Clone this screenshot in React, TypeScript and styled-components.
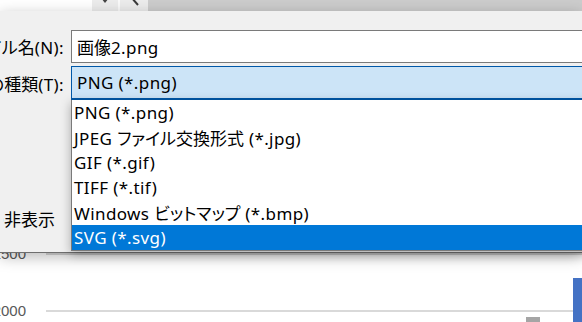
import React from "react";
import styled, { createGlobalStyle } from "styled-components";

const Global = createGlobalStyle`
  html, body { margin: 0; padding: 0; background: #ffffff; }
  body {
    width: 582px; height: 322px; overflow: hidden;
    font-family: "Noto Sans", "Noto Sans CJK JP", sans-serif;
    color: #000;
  }
`;

const Screen = styled.div`
  width: 582px;
  height: 322px;
  display: flex;
  flex-direction: column;
  overflow: hidden;
`;

const TopStrip = styled.div`
  display: flex;
  height: 11px;
  flex: none;
`;

const StripSeg = styled.div<{ $w?: number; $bg: string }>`
  ${(p) => (p.$w ? `width: ${p.$w}px; flex: none;` : "flex: 1;")}
  background: ${(p) => p.$bg};
  display: flex;
  align-items: flex-start;
  justify-content: center;
  overflow: hidden;
`;

const Divider = styled.div`
  width: 2px;
  flex: none;
  background: #fafafa;
`;

const Dialog = styled.div`
  flex: none;
  height: 242px;
  box-sizing: border-box;
  background: #f0f0f0;
  border-bottom: 1px solid #6e6e6e;
  box-shadow: 0 4px 14px rgba(0, 0, 0, 0.28);
  position: relative;
  z-index: 2;
  padding-top: 19px;
  display: flex;
  flex-direction: column;
  font-family: "Noto Sans", "Noto Sans CJK JP", sans-serif;
  font-size: 17px;
  letter-spacing: 0.4px;
`;

const Cjk = styled.span`
  font-family: "Noto Sans CJK JP", sans-serif;
  font-size: 17px;
  letter-spacing: 0;
  font-feature-settings: "palt" 1;
`;

const FieldRow = styled.div<{ $gap?: number }>`
  display: grid;
  grid-template-columns: 64px 1fr;
  column-gap: 7px;
  align-items: center;
  margin-top: ${(p) => p.$gap ?? 0}px;
`;

const Label = styled.div<{ $w?: number; $indent?: number }>`
  display: flex;
  justify-content: flex-end;
  align-items: baseline;
  overflow: hidden;
  white-space: nowrap;
  ${(p) => (p.$w ? `width: ${p.$w}px;` : "")}
  margin-left: ${(p) => p.$indent ?? 0}px;
`;

const Txt = styled.span`
  flex: none;
  font-family: inherit;
  font-size: inherit;
`;

const Field = styled.div<{ $active?: boolean }>`
  height: ${(p) => (p.$active ? 34 : 33)}px;
  box-sizing: border-box;
  border: 1px solid ${(p) => (p.$active ? "#0058a8" : "#7a7a7a")};
  border-bottom-width: ${(p) => (p.$active ? 2 : 1)}px;
  border-right: none;
  background: ${(p) => (p.$active ? "#cce4f7" : "#ffffff")};
  padding-left: 5px;
  display: flex;
  align-items: center;
  white-space: nowrap;
`;

const ComboWrap = styled.div`
  position: relative;
`;

const List = styled.ul`
  position: absolute;
  top: 100%;
  left: 0;
  right: -10px;
  margin: 0;
  padding: 0;
  list-style: none;
  background: #ffffff;
  border: 1px solid #7a7a7a;
  border-top: none;
  box-shadow: 0 3px 10px rgba(0, 0, 0, 0.3);
  font-family: inherit;
  font-size: inherit;
`;

const Item = styled.li<{ $selected?: boolean }>`
  height: 25px;
  padding-left: 2px;
  display: flex;
  align-items: center;
  white-space: nowrap;
  background: ${(p) => (p.$selected ? "#0078d7" : "transparent")};
  color: ${(p) => (p.$selected ? "#ffffff" : "#000000")};
`;

const HideRow = styled.div`
  margin-top: 106px;
  height: 25px;
  display: flex;
  align-items: center;
`;

const Chart = styled.div`
  flex: 1;
  position: relative;
  overflow: hidden;
  background: #ffffff;
`;

const AxisGrid = styled.div`
  margin-top: -28px;
  display: grid;
  grid-template-columns: 26px 1fr;
  column-gap: 20px;
  grid-auto-rows: 57px;
  align-items: center;
`;

const AxisLabel = styled.div`
  display: flex;
  justify-content: flex-end;
  overflow: hidden;
  white-space: nowrap;
  font-family: "Liberation Sans", Arial, sans-serif;
  font-size: 15px;
  color: #595959;
  line-height: 1;
`;

const GridLine = styled.div`
  height: 2px;
  background: #d9d9d9;
`;

const Bar = styled.div<{ $left: number; $width: number; $top: number; $color: string }>`
  position: absolute;
  left: ${(p) => p.$left}px;
  width: ${(p) => p.$width}px;
  top: ${(p) => p.$top}px;
  bottom: 0;
  background: ${(p) => p.$color};
`;

const CJK_RUN = /([\u3040-\u30ff\u3400-\u9fff]+)/;

function Mixed({ text }: { text: string }) {
  return (
    <Txt>
      {text.split(CJK_RUN).map((part, i) =>
        part === "" ? null : CJK_RUN.test(part) ? (
          <Cjk key={i}>{part}</Cjk>
        ) : (
          <React.Fragment key={i}>{part}</React.Fragment>
        )
      )}
    </Txt>
  );
}

const types = [
  "PNG (*.png)",
  "JPEG ファイル交換形式 (*.jpg)",
  "GIF (*.gif)",
  "TIFF (*.tif)",
  "Windows ビットマップ (*.bmp)",
  "SVG (*.svg)",
];

export default function App() {
  return (
    <>
      <Global />
      <Screen>
        <TopStrip>
          <StripSeg $w={92} $bg="#ffffff" />
          <StripSeg $w={26} $bg="#ececec">
            <svg width="10" height="4" viewBox="0 0 10 4">
              <path d="M1 -2 L5 3 L9 -2 Z" fill="#444" />
            </svg>
          </StripSeg>
          <Divider />
          <StripSeg $w={28} $bg="#ececec">
            <svg width="16" height="6" viewBox="0 0 16 6" style={{ marginLeft: 4 }}>
              <path d="M3 -3 L10 5" stroke="#3a3a3a" strokeWidth="2" fill="none" />
            </svg>
          </StripSeg>
          <StripSeg $bg="#cccccc" />
        </TopStrip>
        <Dialog>
          <FieldRow>
            <Label>
              <Mixed text="ファイル名(N):" />
            </Label>
            <Field>
              <Mixed text="画像2.png" />
            </Field>
          </FieldRow>
          <FieldRow $gap={3}>
            <Label>
              <Mixed text="ファイルの種類(T):" />
            </Label>
            <ComboWrap>
              <Field $active>
                <Mixed text="PNG (*.png)" />
              </Field>
              <List>
                {types.map((t, i) => (
                  <Item key={t} $selected={i === types.length - 1}>
                    <Mixed text={t} />
                  </Item>
                ))}
              </List>
            </ComboWrap>
          </FieldRow>
          <HideRow>
            <Label $w={52} $indent={3}>
              <Mixed text="フォルダーの非表示" />
            </Label>
          </HideRow>
        </Dialog>
        <Chart>
          <AxisGrid>
            <AxisLabel>2500</AxisLabel>
            <GridLine />
            <AxisLabel>2000</AxisLabel>
            <GridLine />
          </AxisGrid>
          <Bar $left={526} $width={14} $top={64} $color="#a5a5a5" />
          <Bar $left={573} $width={12} $top={25} $color="#4472c4" />
        </Chart>
      </Screen>
    </>
  );
}
